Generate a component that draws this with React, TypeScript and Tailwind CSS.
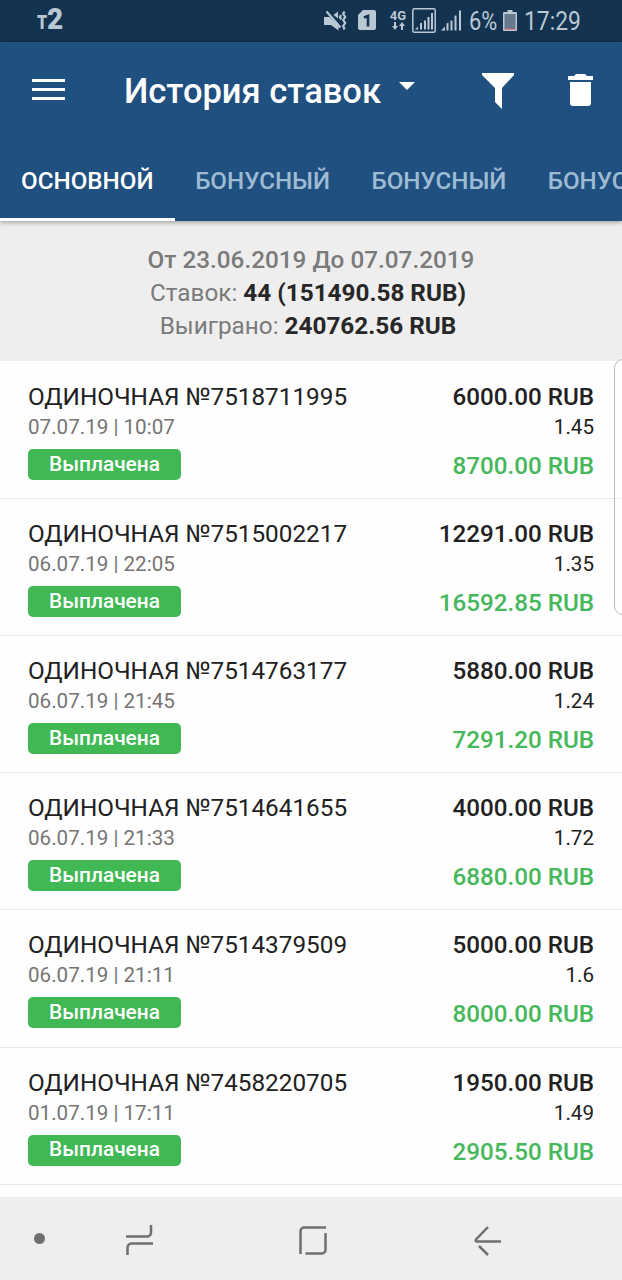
interface Bet {
  id: string; date: string; stake: string; odds: string; payout: string;
}

const TABS = ['ОСНОВНОЙ', 'БОНУСНЫЙ', 'БОНУСНЫЙ', 'БОНУСНЫЙ'];

const BETS: Bet[] = [
  { id: '7518711995', date: '07.07.19 | 10:07', stake: '6000.00', odds: '1.45', payout: '8700.00' },
  { id: '7515002217', date: '06.07.19 | 22:05', stake: '12291.00', odds: '1.35', payout: '16592.85' },
  { id: '7514763177', date: '06.07.19 | 21:45', stake: '5880.00', odds: '1.24', payout: '7291.20' },
  { id: '7514641655', date: '06.07.19 | 21:33', stake: '4000.00', odds: '1.72', payout: '6880.00' },
  { id: '7514379509', date: '06.07.19 | 21:11', stake: '5000.00', odds: '1.6', payout: '8000.00' },
  { id: '7458220705', date: '01.07.19 | 17:11', stake: '1950.00', odds: '1.49', payout: '2905.50' },
];

const StatusBar = () => (
  <div className="flex h-[42px] shrink-0 items-start bg-[#133350] text-[#b9c8d3]">
    <div className="mt-[6px] ml-[37px] flex items-end leading-none">
      <span className="w-[10px] origin-left scale-x-[0.8] text-[25px] font-bold leading-[22px]">т</span>
      <span className="origin-left scale-x-[0.93] text-[30px] font-black leading-[26px]">2</span>
    </div>
    {/* muted with vibration */}
    <svg className="mt-[10px] ml-auto shrink-0" width="23" height="22" viewBox="0 0 23 22" fill="currentColor">
      <path d="M0 7h5.500l9 8.500v5L7 15H0zM9.500 5l4.500-3.500v7z" />
      <path d="M2.500 1.500l14 16" stroke="currentColor" strokeWidth="2" />
      <path d="M17 5l-1 2 1 2.500M20.500 1.500l-1.300 2.500 2 3-2 3 2 3-2 3 1.300 3.500" fill="none" stroke="currentColor" strokeWidth="2.200" />
    </svg>
    <svg className="mt-[10px] ml-[11px] shrink-0" width="18" height="20" viewBox="0 0 18 20">
      <path d="M5 0h11a2 2 0 0 1 2 2v16a2 2 0 0 1-2 2H2a2 2 0 0 1-2-2V5z" fill="currentColor" />
      <path d="M6 7.500l4-1.500v10.500" fill="none" stroke="#133350" strokeWidth="2.600" />
    </svg>
    <div className="mt-[10px] ml-[13px] flex w-[18px] flex-col items-center">
      <span className="text-[13px] font-bold leading-[12px]">4G</span>
      <svg width="13" height="8" viewBox="0 0 13 8" fill="currentColor">
        <path d="M2 0h2v4h2L3 8 0 4h2zM9 8h2V4h2L10 0 7 4h2z" />
      </svg>
    </div>
    <svg className="mt-[8px] ml-[5px] shrink-0" width="24" height="25" viewBox="0 0 24 25" fill="currentColor">
      <rect x="0.8" y="0.8" width="22.4" height="23.4" rx="1.5" fill="none" stroke="currentColor" strokeWidth="1.500" />
      <path d="M3 21.500l3-3v3zM8 21.500v-6l2-1v7zM12 21.500v-9h2v9zM15.500 21.500V9h2v12.500zM19 21.500V5h2v16.500z" />
    </svg>
    <svg className="mt-[10px] ml-[5px] shrink-0" width="21" height="21" viewBox="0 0 21 21" fill="currentColor">
      <path d="M0 20.500l4-4v4zM5.500 20.500v-7l2-1v8zM9.500 20.500v-10h2v10zM13.500 20.500V5.500h2v15zM18 20.500V.5h2v20z" />
    </svg>
    <span className="mt-[6px] ml-[7px] w-[27px] origin-left scale-x-[0.84] whitespace-nowrap text-[26px] leading-[30px]">6%</span>
    <svg className="mt-[10px] ml-[7px] shrink-0" width="14" height="21" viewBox="0 0 14 21">
      <path d="M4.500 0h5v2H13a1 1 0 0 1 1 1v17a1 1 0 0 1-1 1H1a1 1 0 0 1-1-1V3a1 1 0 0 1 1-1h3.500z" fill="#b9c8d3" />
      <path d="M1.500 4h11v15h-11z" fill="#68798d" />
      <path d="M1.500 18.500h11v1.200h-11z" fill="#c96a7c" />
    </svg>
    <span className="mt-[6px] mr-[42px] ml-[7px] w-[56px] origin-left scale-x-[0.88] whitespace-nowrap text-[26px] leading-[30px]">17:29</span>
  </div>
);

const Header = () => (
  <header className="relative z-10 flex h-[179px] shrink-0 flex-col bg-[#1f507f] text-white shadow-[0_1px_5px_rgba(0,0,0,0.4)]">
    <div className="flex h-[98px] items-center">
      <div className="mb-[4px] ml-[32px] flex w-[33px] flex-col gap-[6px]">
        <span className="h-[3px] bg-white" />
        <span className="h-[3px] bg-white" />
        <span className="h-[3px] bg-white" />
      </div>
      <h1 className="mt-[2px] ml-[59px] whitespace-nowrap text-[34.500px] font-medium">История ставок</h1>
      <svg className="mb-[10px] ml-[18px]" width="16" height="8" viewBox="0 0 16 8"><path d="M0 0h16L8 8z" fill="white" /></svg>
      <svg className="ml-auto" width="32" height="36" viewBox="0 0 32 36"><path d="M0 0h32v2L20 15v21l-7-7V15L0 2z" fill="white" /></svg>
      <svg className="mb-[2px] mr-[29px] ml-[54px]" width="25" height="33" viewBox="0 0 25 33" fill="white">
        <path d="M0 2h6l2-2h9l2 2h6v4H0zM2 8h21v21a3 3 0 0 1-3 3H5a3 3 0 0 1-3-3z" />
      </svg>
    </div>
    <nav className="flex flex-1 overflow-hidden">
      {TABS.map((tab, i) => (
        <div
          key={i}
          className={`flex shrink-0 justify-center border-b-[3px] pt-[26px] text-[24.200px] font-medium leading-[30px] ${i === 0 ? 'w-[174.500px] border-white' : 'w-[176.300px] border-transparent text-[#9ebbd4]'}`}
        >
          {tab}
        </div>
      ))}
    </nav>
  </header>
);

const Summary = () => (
  <div className="h-[140px] shrink-0 bg-[#eee] pt-[22px] text-center text-[24.300px] leading-[33px] text-[#7a7a7a]">
    <p className="font-medium">От 23.06.2019 До 07.07.2019</p>
    <p className="mr-[6px]">Ставок: <b className="text-[#272727]">44 (151490.58 RUB)</b></p>
    <p className="mr-[6px]">Выиграно: <b className="text-[#272727]">240762.56 RUB</b></p>
  </div>
);

const BetRow = ({ bet }: { bet: Bet }) => (
  <div className="flex h-[137.200px] shrink-0 justify-between border-b border-[#e6e6e6] px-[28px] pt-[20px]">
    <div>
      <div className="text-[24.300px] leading-[30px] text-[#212121]">ОДИНОЧНАЯ №{bet.id}</div>
      <div className="text-[20.600px] leading-[31px] text-[#757575]">{bet.date}</div>
      <div className="mt-[6px] flex h-[31px] w-[153px] items-center justify-center rounded-[5px] bg-[#40b854] text-[20.900px] font-medium text-white">
        Выплачена
      </div>
    </div>
    <div className="text-right">
      <div className="text-[24.200px] font-medium leading-[30px] text-[#212121]">{bet.stake} RUB</div>
      <div className="text-[20.600px] leading-[31px] text-[#212121]">{bet.odds}</div>
      <div className="mt-[8px] text-[24.200px] font-medium leading-[30px] text-[#46b75b]">{bet.payout} RUB</div>
    </div>
  </div>
);

const NavBar = () => (
  <div className="flex h-[83px] shrink-0 items-center bg-[#eee]">
    <span className="mb-[1px] ml-[34px] h-[11px] w-[11px] rounded-full bg-[#6f6f6f]" />
    <svg className="mt-[4px] ml-[81px]" width="27" height="31" viewBox="0 0 27 31" fill="none" stroke="#6f6f6f" strokeWidth="2.500">
      <path d="M0 11.500h21a4 4 0 0 0 4-4V0M27 18.500H5.500a4 4 0 0 0-4 4V30" />
    </svg>
    <svg className="mt-[5px] ml-[146px]" width="28" height="30" viewBox="0 0 28 30" fill="none" stroke="#6f6f6f" strokeWidth="2.500">
      <path d="M1.500 28V5a3.500 3.500 0 0 1 3.500-3.500h22M26.500 7v17a3.500 3.500 0 0 1-3.500 3.500H6.500" />
    </svg>
    <svg className="mt-[5px] ml-[147px]" width="28" height="30" viewBox="0 0 28 30" fill="none" stroke="#6f6f6f" strokeWidth="2.500">
      <path d="M14 1L2 13.500q-1 2 1 2h24M5 20l9 9" />
    </svg>
  </div>
);

export default function App() {
  return (
    <div className="relative flex h-[1280px] w-[622px] flex-col overflow-hidden bg-[#fefefe] font-['Roboto',sans-serif]">
      <StatusBar />
      <Header />
      <Summary />
      <main className="flex-1 overflow-hidden pt-[0.700px]">
        {BETS.map((bet) => <BetRow key={bet.id} bet={bet} />)}
      </main>
      <NavBar />
      {/* edge panel handle */}
      <div className="absolute top-[359px] left-[614px] z-20 h-[256px] w-[20px] rounded-[9px] border border-[#bdbdbd] bg-white/40" />
    </div>
  );
}
